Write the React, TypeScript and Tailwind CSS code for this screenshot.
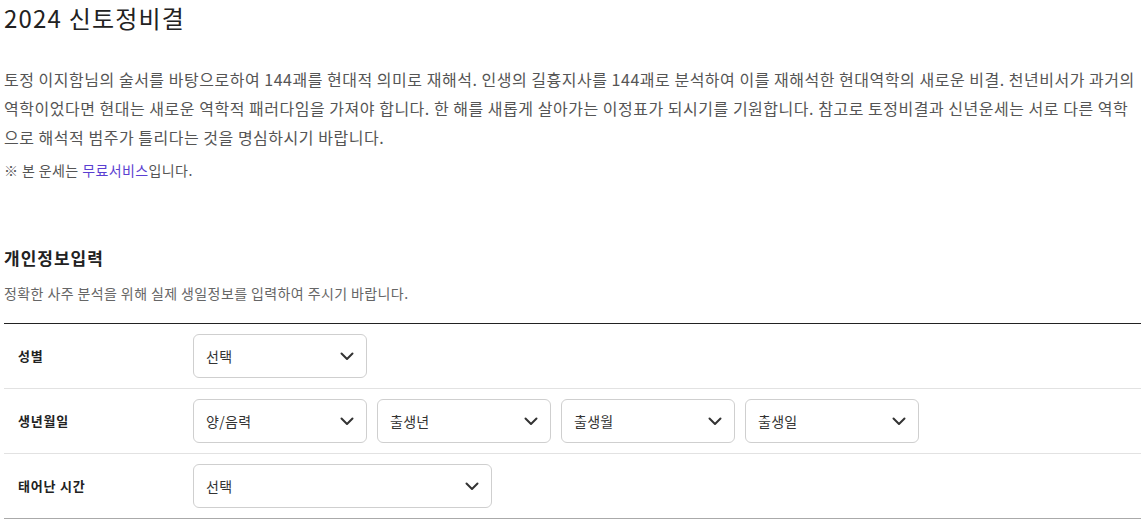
import React from "react";

const font = "font-['Noto_Sans_CJK_KR','Noto_Sans',sans-serif]";

interface SelectBoxProps {
  label: string;
  width: string;
}

const Chevron: React.FC = () => (
  <svg width="14" height="9" viewBox="0 0 14 9" fill="none">
    <path d="M1.5 1.5 7 7l5.5-5.5" stroke="#333" strokeWidth="2" strokeLinecap="round" strokeLinejoin="round" />
  </svg>
);

const SelectBox: React.FC<SelectBoxProps> = ({ label, width }) => (
  <button
    type="button"
    className={`${width} h-[44px] flex items-center justify-between pl-[12px] pr-[12px] border border-[#cfcfcf] rounded-[6px] bg-white text-[14px] tracking-[0.3px] text-[#333]`}
  >
    <span>{label}</span>
    <Chevron />
  </button>
);

const FormRow: React.FC<{ title: string; last?: boolean; children: React.ReactNode }> = ({ title, last, children }) => (
  <div className={`flex items-center h-[65px] border-b ${last ? "border-[#aaaaaa]" : "border-[#e2e2e2]"}`}>
    <div className="w-[189px] pl-[14px] text-[13px] tracking-[0.8px] font-bold text-[#222]">{title}</div>
    <div className="flex gap-[10px]">{children}</div>
  </div>
);

export default function App() {
  return (
    <div className={`${font} bg-white min-h-[521px] px-[4px]`}>
      <h1 className="text-[24px] leading-[36px] tracking-[1.2px] text-[#222] font-normal">2024 신토정비결</h1>

      <p className="mt-[29px] text-[16px] leading-[29px] text-[#555] tracking-[0.52px]">
        토정 이지함님의 술서를 바탕으로하여 144괘를 현대적 의미로 재해석. 인생의 길흉지사를 144괘로 분석하여 이를 재해석한
        현대역학의 새로운 비결. 천년비서가 과거의 역학이었다면 현대는 새로운 역학적 패러다임을 가져야 합니다. 한 해를 새롭게
        살아가는 이정표가 되시기를 기원합니다. 참고로 토정비결과 신년운세는 서로 다른 역학으로 해석적 범주가 틀리다는 것을
        명심하시기 바랍니다.
      </p>
      <p className="mt-[8px] text-[14px] leading-[20px] tracking-[0.4px] text-[#555]">
        ※ 본 운세는 <span className="text-[#5b3fd1]">무료서비스</span>입니다.
      </p>

      <h2 className="mt-[66px] text-[17px] leading-[24px] tracking-[1px] font-bold text-[#222]">개인정보입력</h2>
      <p className="mt-[13px] text-[14px] leading-[20px] tracking-[0.4px] text-[#666]">
        정확한 사주 분석을 위해 실제 생일정보를 입력하여 주시기 바랍니다.
      </p>

      <div className="mt-[20px] border-t border-[#222]">
        <FormRow title="성별">
          <SelectBox label="선택" width="w-[174px]" />
        </FormRow>
        <FormRow title="생년월일">
          <SelectBox label="양/음력" width="w-[174px]" />
          <SelectBox label="출생년" width="w-[174px]" />
          <SelectBox label="출생월" width="w-[174px]" />
          <SelectBox label="출생일" width="w-[174px]" />
        </FormRow>
        <FormRow title="태어난 시간" last>
          <SelectBox label="선택" width="w-[299px]" />
        </FormRow>
      </div>
    </div>
  );
}
